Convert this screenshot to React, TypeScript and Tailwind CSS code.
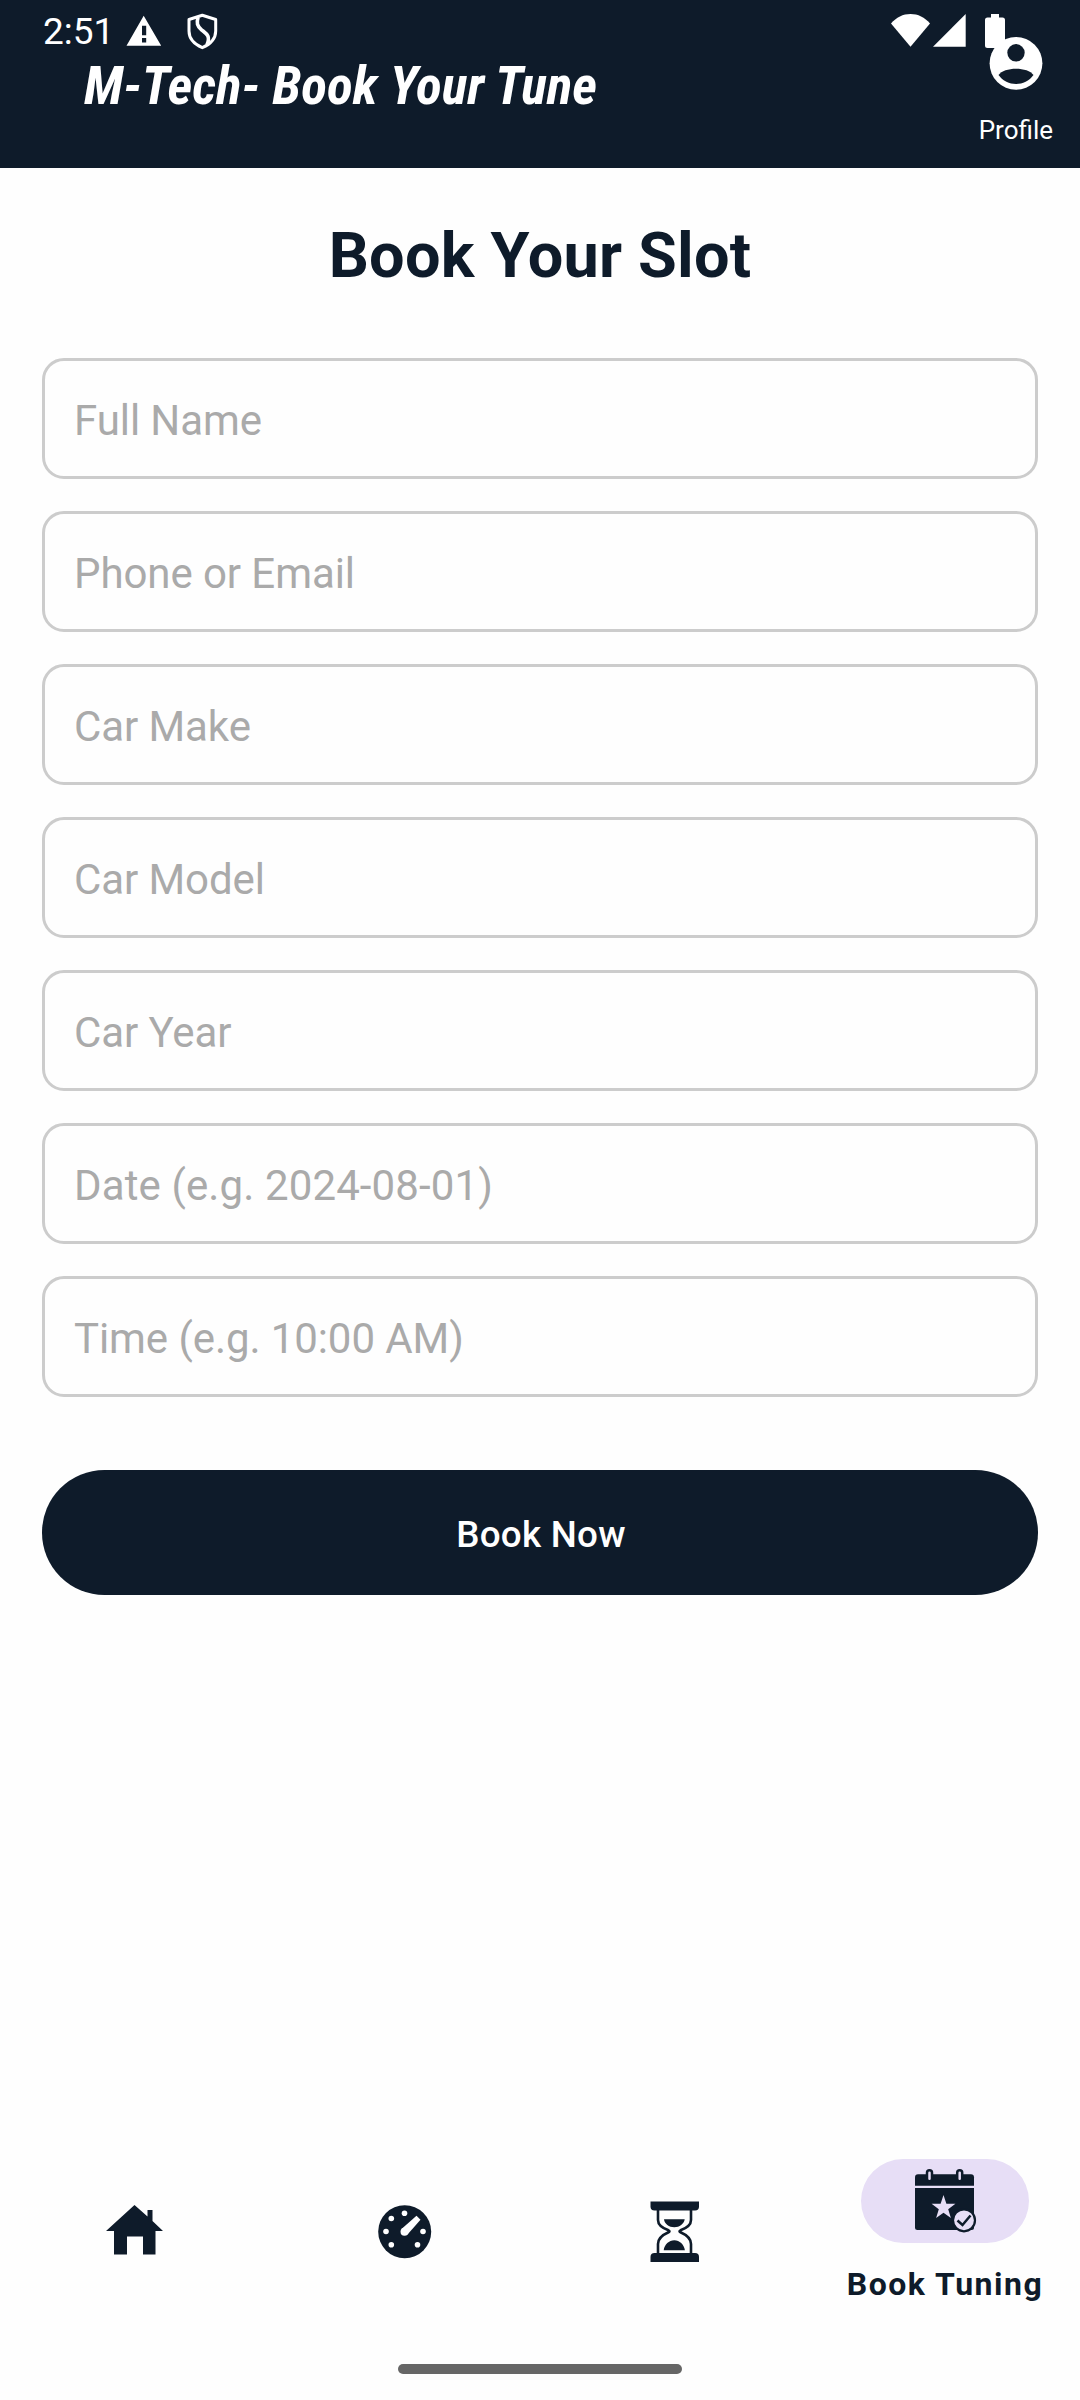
const fields = [
  "Full Name",
  "Phone or Email",
  "Car Make",
  "Car Model",
  "Car Year",
  "Date (e.g. 2024-08-01)",
  "Time (e.g. 10:00 AM)",
];

function StatusBar() {
  return (
    <div className="absolute inset-x-0 top-0 h-[63px] text-white">
      <span className="absolute left-[43px] top-[10px] text-[37px] leading-[43px]">2:51</span>
      <svg className="absolute left-[126px] top-[15px]" width="36" height="32" fill="white">
        <path fillRule="evenodd" d="M17.700 .7 35.200 30.800H.5ZM16 10.700h4.200v9.500H16ZM16 23h4.200v4.500H16Z" />
      </svg>
      <svg className="absolute left-[187px] top-[13px]" width="31" height="37" fill="none" stroke="white" strokeWidth="3" strokeLinejoin="round">
        <path d="M15.300 2.300 28.700 6.500v11.500c0 7.500-5.300 13.200-13.400 16.700C7.300 31.200 2 25.500 2 18V6.500Z" />
        <path strokeWidth="3.600" d="M11 4.500C9.500 10 10 13 14.500 16.800c4.500 3.700 9.500 6 5.500 15" />
      </svg>
      <svg className="absolute left-[891px] top-[14px]" width="39" height="33" fill="white">
        <path d="M19.500 32.700 0 9.500C5.300 3.300 12 0 19.500 0S33.700 3.300 39 9.500Z" />
      </svg>
      <svg className="absolute left-[933px] top-[14px]" width="33" height="33" fill="white">
        <path d="M0 32.700 32.700 0v32.700Z" />
      </svg>
      <svg className="absolute left-[985px] top-[14px]" width="20" height="34" fill="white">
        <path d="M6 0h8v3.500h3.500Q20 3.500 20 6v25.500q0 2.500-2.500 2.500h-15Q0 34 0 31.500V6q0-2.500 2.500-2.500H6Z" />
      </svg>
    </div>
  );
}

function Header() {
  return (
    <header className="relative h-[168px] bg-[#0e1b2a] text-white">
      <StatusBar />
      <div className="flex justify-between pl-[84px] pr-[27px]">
        <h1 className="mt-[55px] whitespace-nowrap text-[53.3px] font-bold italic leading-[62px] [font-family:'Roboto_Condensed',Roboto,sans-serif] [font-stretch:75%]">
          M-Tech- Book Your Tune
        </h1>
        <div className="mt-[36px] flex flex-col items-center">
          <svg width="54" height="54" viewBox="0 0 54 54">
            <circle cx="27" cy="27.300" r="26.400" fill="white" />
            <circle cx="27" cy="16.800" r="8.700" fill="#0e1b2a" />
            <path fill="#0e1b2a" d="M9.500 39C15 30.500 39 30.500 44.500 39 36 51 18 51 9.500 39Z" />
          </svg>
          <span className="mt-[25px] text-[26px] leading-[31px]">Profile</span>
        </div>
      </div>
    </header>
  );
}

function HomeIcon() {
  return (
    <svg width="58" height="50" fill="#0e1b2a">
      <path d="M0 26 28.500 0 41.500 11.500V5h5v11L57 26h-7.500v23.500H37V31.500H21v18H8V26Z" />
    </svg>
  );
}

function GaugeIcon() {
  return (
    <svg width="54" height="54">
      <circle cx="26.700" cy="26.700" r="26.500" fill="#0e1b2a" />
      <g fill="white">
        <circle cx="26.500" cy="8.300" r="2.800" />
        <circle cx="13.300" cy="13.500" r="2.800" />
        <circle cx="8" cy="26.500" r="2.800" />
        <circle cx="13.300" cy="39.700" r="2.800" />
        <circle cx="39.500" cy="39.700" r="2.800" />
        <circle cx="45" cy="26.500" r="2.800" />
        <circle cx="26.500" cy="26.700" r="4" />
        <path d="M23.500 24 38.500 10.800l4 4-13 14.700Z" />
      </g>
    </svg>
  );
}

function HourglassIcon() {
  return (
    <svg width="50" height="62" fill="#0e1b2a">
      <path d="M.5 .5h48.500v5q0 4-4 4H4.500q-4 0-4-4Z" />
      <path d="M.5 61h48.500v-5q0-4-4-4H4.500q-4 0-4 4Z" />
      <path fill="none" stroke="#0e1b2a" strokeWidth="2.600" d="M8 9v10c0 6 5.500 8.500 10.500 10.300q2 1 0 2C13.500 33.500 8 37 8 43v10M41 9v10c0 6-5.500 8.500-10.500 10.300q-2 1 0 2C35.500 33.500 41 37 41 43v10" />
      <path d="M14 18.300h20.700C34 23 29.500 26.300 24.300 26.300S14.500 23 14 18.300ZM13.700 49.200C14.500 43.500 19 39.300 24.300 39.300S34 43.500 34.900 49.200Z" />
    </svg>
  );
}

function CalendarIcon() {
  return (
    <svg className="ml-px" width="62" height="64" fill="#0e1b2a">
      <path d="M3 5.300h53q3 0 3 3v8.500H0V8.300q0-3 3-3Z" />
      <path d="M0 19h59v39.500q0 2.500-2.500 2.500h-54Q0 61 0 58.500Z" />
      <g fill="#e7def6" stroke="#0e1b2a" strokeWidth="2.500">
        <rect x="12" y="1.300" width="5" height="11" rx="2.500" />
        <rect x="42.200" y="1.300" width="5" height="11" rx="2.500" />
      </g>
      <path fill="#e7def6" d="m28.500 26 2.900 8.800h9l-7.200 5.500 2.700 8.800-7.400-5.300-7.400 5.300 2.700-8.800-7.200-5.500h9Z" />
      <circle cx="49" cy="51.300" r="11" fill="#e7def6" stroke="#0e1b2a" strokeWidth="2.200" />
      <path fill="none" stroke="#0e1b2a" strokeWidth="2.500" d="m42.500 51.500 5 4.500 8-9.500" />
    </svg>
  );
}

export default function App() {
  return (
    <div className="flex h-[2400px] w-[1080px] flex-col overflow-hidden bg-[#fefefe] text-[#0e1b2a] [font-family:Roboto,sans-serif]">
      <Header />
      <main className="flex flex-1 flex-col px-[42px]">
        <h2 className="mt-[51px] text-center text-[63px] font-bold leading-[74px] tracking-[0.22px]">Book Your Slot</h2>
        <form className="mt-[65px] flex flex-col gap-[32px]">
          {fields.map((f) => (
            <input
              key={f}
              placeholder={f}
              className={`h-[121px] rounded-[22px] border-[3px] border-[#cccccc] bg-transparent px-[29px] pt-[3px] text-[42px] placeholder:text-[#aaaaaa] ${
                f.startsWith("Date") ? "tracking-[0.12px]" : "tracking-[-0.08px]"
              }`}
            />
          ))}
          <button
            type="button"
            className="mt-[41px] h-[125px] rounded-full bg-[#0e1b2a] pl-[2px] pt-[4px] text-[36.75px] font-medium tracking-[0.27px] text-white"
          >
            Book Now
          </button>
        </form>
      </main>
      <nav className="grid h-[264px] grid-cols-4">
        <a className="flex justify-center pt-[69px]"><HomeIcon /></a>
        <a className="flex justify-center pt-[69px]"><GaugeIcon /></a>
        <a className="flex justify-center pt-[65px]"><HourglassIcon /></a>
        <a className="flex flex-col items-center pt-[23px]">
          <span className="flex h-[84px] w-[168px] justify-center rounded-full bg-[#e7def6] pt-[10px]"><CalendarIcon /></span>
          <span className="mt-[22px] whitespace-nowrap text-[32px] font-bold leading-[38px] tracking-[1.5px]">Book Tuning</span>
        </a>
      </nav>
      <div className="mx-auto mb-[26px] mt-[-36px] h-[10px] w-[284px] rounded-full bg-[#666666]" />
    </div>
  );
}
